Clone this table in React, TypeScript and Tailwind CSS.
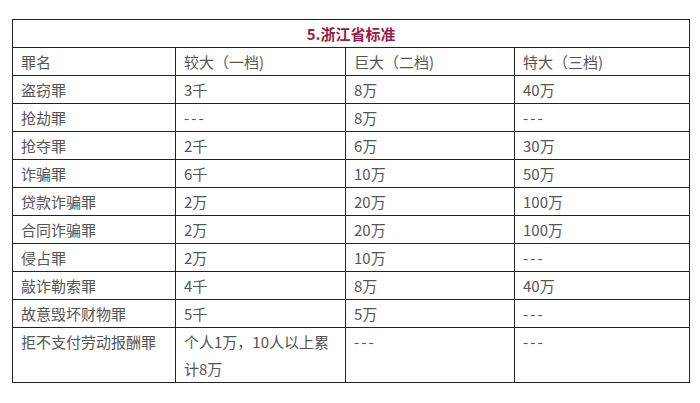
import React from "react";

const rows: [string, string, string, string][] = [
  ["盗窃罪", "3千", "8万", "40万"],
  ["抢劫罪", "---", "8万", "---"],
  ["抢夺罪", "2千", "6万", "30万"],
  ["诈骗罪", "6千", "10万", "50万"],
  ["贷款诈骗罪", "2万", "20万", "100万"],
  ["合同诈骗罪", "2万", "20万", "100万"],
  ["侵占罪", "2万", "10万", "---"],
  ["敲诈勒索罪", "4千", "8万", "40万"],
  ["故意毁坏财物罪", "5千", "5万", "---"],
];

const cell = "border border-[#222] px-[8px] py-0 align-top text-left leading-[27px] h-[28px]";

function Txt({ c }: { c: string }) {
  if (c === "---") return <span className="tracking-[2px]">{c}</span>;
  return <>{c}</>;
}

export default function App() {
  return (
    <div
      className="w-[700px] h-[403px] bg-white pt-[19px] pl-[12px]"
      style={{ fontFamily: '"Noto Sans CJK SC", "Noto Sans", sans-serif' }}
    >
      <table className="border-collapse text-[15px] text-[#555] table-fixed w-[677px]">
        <colgroup>
          <col className="w-[163px]" />
          <col className="w-[170px]" />
          <col className="w-[169px]" />
          <col className="w-[175px]" />
        </colgroup>
        <tbody>
          <tr>
            <td colSpan={4} className="border border-[#222] text-center font-bold text-[#9b1b46] leading-[27px] h-[28px]">
              5.浙江省标准
            </td>
          </tr>
          <tr>
            <td className={cell}>罪名</td>
            <td className={cell}>较大（一档)</td>
            <td className={cell}>巨大（二档)</td>
            <td className={cell}>特大（三档)</td>
          </tr>
          {rows.map((r) => (
            <tr key={r[0]}>
              {r.map((c, i) => (
                <td key={i} className={cell}>
                  <Txt c={c} />
                </td>
              ))}
            </tr>
          ))}
          <tr>
            <td className={cell}>拒不支付劳动报酬罪</td>
            <td className={cell}>个人1万，10人以上累计8万</td>
            <td className={cell}>
              <Txt c="---" />
            </td>
            <td className={cell}>
              <Txt c="---" />
            </td>
          </tr>
        </tbody>
      </table>
    </div>
  );
}
